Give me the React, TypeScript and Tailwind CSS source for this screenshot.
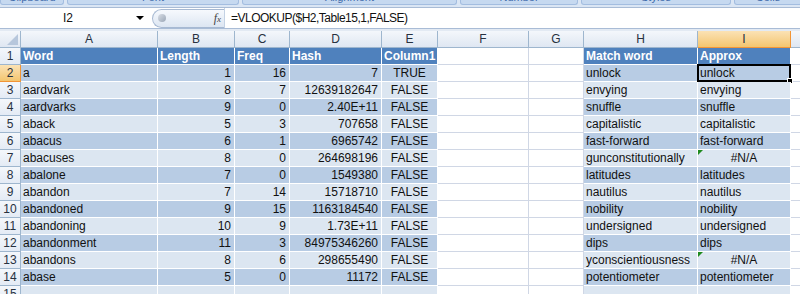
import React from 'react';

type Row = [string, string, string, string, string, string, string];

const rows: Row[] = [
  ['a', '1', '16', '7', 'TRUE', 'unlock', 'unlock'],
  ['aardvark', '8', '7', '12639182647', 'FALSE', 'envying', 'envying'],
  ['aardvarks', '9', '0', '2.40E+11', 'FALSE', 'snuffle', 'snuffle'],
  ['aback', '5', '3', '707658', 'FALSE', 'capitalistic', 'capitalistic'],
  ['abacus', '6', '1', '6965742', 'FALSE', 'fast-forward', 'fast-forward'],
  ['abacuses', '8', '0', '264698196', 'FALSE', 'gunconstitutionally', '#N/A'],
  ['abalone', '7', '0', '1549380', 'FALSE', 'latitudes', 'latitudes'],
  ['abandon', '7', '14', '15718710', 'FALSE', 'nautilus', 'nautilus'],
  ['abandoned', '9', '15', '1163184540', 'FALSE', 'nobility', 'nobility'],
  ['abandoning', '10', '9', '1.73E+11', 'FALSE', 'undersigned', 'undersigned'],
  ['abandonment', '11', '3', '84975346260', 'FALSE', 'dips', 'dips'],
  ['abandons', '8', '6', '298655490', 'FALSE', 'yconscientiousness', '#N/A'],
  ['abase', '5', '0', '11172', 'FALSE', 'potentiometer', 'potentiometer'],
  ['', '', '', '', '', '', ''],
];

const ribbonGroups = [
  { label: 'Clipboard', w: 'w-[64px]' },
  { label: 'Font', w: 'w-[172px]' },
  { label: 'Alignment', w: 'w-[215px]' },
  { label: 'Number', w: 'w-[118px]' },
  { label: 'Styles', w: 'w-[150px]' },
  { label: 'Cells', w: 'w-[68px]' },
];

const headers = ['A', 'B', 'C', 'D', 'E', 'F', 'G', 'H', 'I'];

function TableCell({
  text,
  align = 'left',
  band,
  flag = false,
  selected = false,
}: {
  text: string;
  align?: 'left' | 'right' | 'center';
  band: 'head' | 'dark' | 'light';
  flag?: boolean;
  selected?: boolean;
}) {
  const bg =
    band === 'head' ? 'bg-[#4f81bd] text-white font-bold' : band === 'dark' ? 'bg-[#b8cce4]' : 'bg-[#dce6f1]';
  const al = align === 'right' ? 'text-right pr-[3px]' : align === 'center' ? 'text-center' : 'text-left pl-[2px]';
  return (
    <div className={`relative border-r border-b border-white whitespace-nowrap overflow-visible ${bg} ${al}`}>
      {flag && (
        <span className="absolute left-0 top-0 w-0 h-0 border-t-[5px] border-t-[#1e8a1e] border-r-[5px] border-r-transparent" />
      )}
      {text}
      {selected && (
        <>
          <span className="absolute -left-[1px] -top-[1px] -right-[1px] -bottom-[1px] border-2 border-black pointer-events-none" />
          <span className="absolute -right-[3px] -bottom-[3px] w-[6px] h-[6px] bg-black border border-white" />
        </>
      )}
    </div>
  );
}

function PlainCell() {
  return <div className="border-r border-b border-[#d0d7e5] bg-white" />;
}

export default function App() {
  return (
    <div className="w-[800px] h-[294px] overflow-hidden bg-white font-['Liberation_Sans',Arial,sans-serif] text-[12px] text-[#111]">
      {/* ribbon group labels, cut off at the top */}
      <div className="h-[7px] bg-[#dbe6f4] flex gap-[3px] overflow-hidden">
        {ribbonGroups.map((g) => (
          <div
            key={g.label}
            className={`${g.w} shrink-0 h-[5px] bg-[#c6d9f0] border border-t-0 border-[#a3bde0] rounded-b-[3px] flex items-end justify-center overflow-hidden`}
          >
            <span className="text-[11px] leading-[11px] text-[#3e6aaa] mb-[1px]">{g.label}</span>
          </div>
        ))}
      </div>

      {/* formula bar */}
      <div className="h-[22px] flex items-center bg-white border-t border-b border-[#a9bcd6]">
        <div className="w-[150px] h-full flex items-center">
          <span className="w-[136px] text-center">I2</span>
          <span className="w-0 h-0 border-x-[4px] border-x-transparent border-t-[4px] border-t-black" />
        </div>
        <div className="ml-[2px] w-[72px] h-[19px] rounded-l-full border border-r-0 border-[#a7b9d2] bg-gradient-to-b from-[#f6f9fd] to-[#dde6f2] flex items-center">
          <span className="ml-[5px] w-[8px] h-[8px] rounded-full bg-gradient-to-br from-[#d9dee6] to-[#9aa6b6]" />
          <span className="ml-auto mr-[3px] italic font-['Liberation_Serif',serif] text-[12px] text-[#444]">
            f<span className="text-[9px]">x</span>
          </span>
        </div>
        <div className="w-px h-full bg-[#c4d2e4]" />
        <span className="ml-[6px] text-[12px] tracking-[-0.5px]">=VLOOKUP($H2,Table15,1,FALSE)</span>
      </div>
      <div className="h-[2px] bg-[#e3eaf3]" />

      {/* sheet grid */}
      <div className="grid grid-cols-[21px_137px_77px_55px_92px_56px_91px_55px_114px_93px_1fr] auto-rows-[17px] leading-[16px]">
        {/* column headers */}
        <div className="relative border-r border-b border-[#9eb6ce] bg-gradient-to-b from-[#f4f7fb] to-[#dfe7f2]">
          <span className="absolute right-[2px] bottom-[2px] w-0 h-0 border-l-[11px] border-l-transparent border-b-[11px] border-b-[#b7c7dc]" />
        </div>
        {headers.map((h) => (
          <div
            key={h}
            className={`border-r border-b text-center text-[#27313f] ${
              h === 'I'
                ? 'border-[#f29536] bg-gradient-to-b from-[#fbe2b4] to-[#f3c56e]'
                : 'border-[#9eb6ce] bg-gradient-to-b from-[#f4f7fb] to-[#dfe7f2]'
            }`}
          >
            {h}
          </div>
        ))}
        <div className="border-b border-[#9eb6ce] bg-gradient-to-b from-[#f4f7fb] to-[#dfe7f2]" />

        {/* row 1: table headers */}
        <div className="border-r border-b border-[#9eb6ce] bg-gradient-to-b from-[#f4f7fb] to-[#e4ebf5] text-center text-[#27313f]">
          1
        </div>
        <TableCell text="Word" band="head" />
        <TableCell text="Length" band="head" />
        <TableCell text="Freq" band="head" />
        <TableCell text="Hash" band="head" />
        <TableCell text="Column1" band="head" />
        <PlainCell />
        <PlainCell />
        <TableCell text="Match word" band="head" />
        <TableCell text="Approx" band="head" />
        <div className="border-b border-[#d0d7e5]" />

        {rows.map((r, i) => {
          const n = i + 2;
          const band = i % 2 === 0 ? 'dark' : 'light';
          const na = r[6] === '#N/A';
          return (
            <React.Fragment key={n}>
              <div
                className={`border-r border-b text-center text-[#27313f] ${
                  n === 2
                    ? 'border-[#f29536] bg-gradient-to-b from-[#fbe2b4] to-[#f3c56e]'
                    : 'border-[#9eb6ce] bg-gradient-to-b from-[#f4f7fb] to-[#e4ebf5]'
                }`}
              >
                {n}
              </div>
              <TableCell text={r[0]} band={band} />
              <TableCell text={r[1]} band={band} align="right" />
              <TableCell text={r[2]} band={band} align="right" />
              <TableCell text={r[3]} band={band} align="right" />
              <TableCell text={r[4]} band={band} align="center" />
              <PlainCell />
              <PlainCell />
              <TableCell text={r[5]} band={band} />
              <TableCell text={r[6]} band={band} align={na ? 'center' : 'left'} flag={na} selected={n === 2} />
              <div className="border-b border-[#d0d7e5]" />
            </React.Fragment>
          );
        })}
      </div>
    </div>
  );
}
